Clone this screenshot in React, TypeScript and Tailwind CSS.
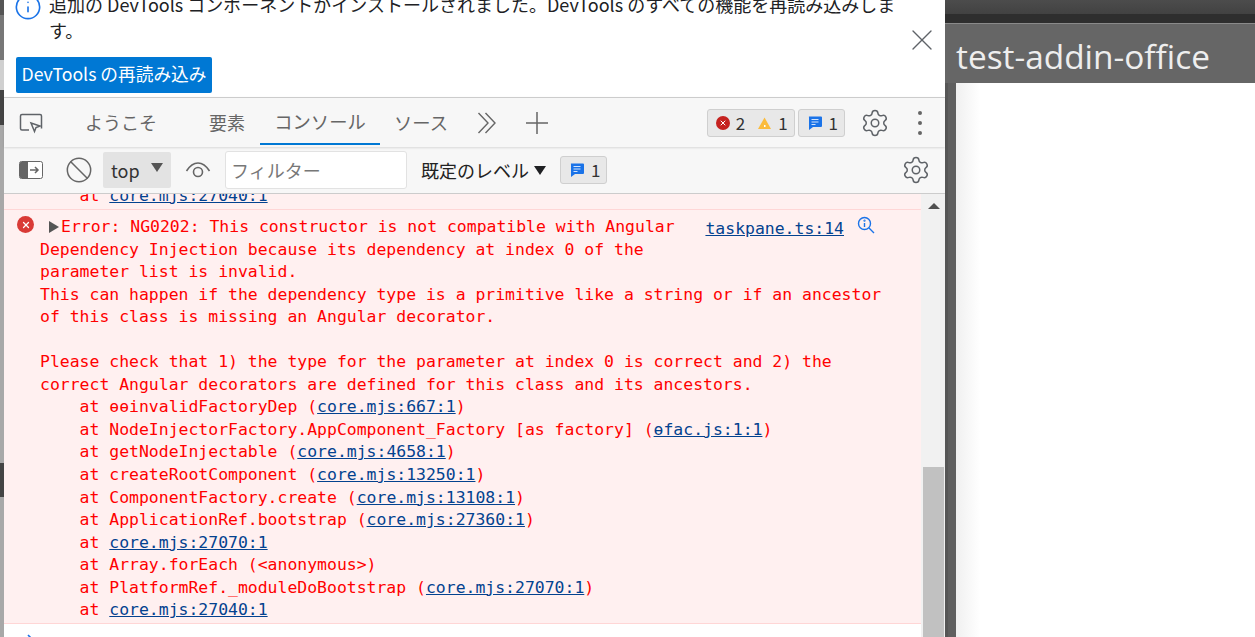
import { Settings, Ban, X, Info } from 'lucide-react'

const MONO = 'font-["DejaVu_Sans_Mono","Liberation_Mono",monospace]'

function Link({ children }: { children: string }) {
  return <span className="text-[#03428f] underline">{children}</span>
}

function MessageIcon({ size = 16 }: { size?: number }) {
  return (
    <svg width={size} height={size} viewBox="0 0 16 16">
      <path d="M2 1.5h12a1 1 0 0 1 1 1v8.5a1 1 0 0 1-1 1H6l-4 3V2.500a1 1 0 0 1 0-1z" fill="#1a73e8" />
      <path d="M4.500 4.500h7M4.500 7h7M4.500 9.500h4" stroke="#d2e3fc" strokeWidth="1.200" />
    </svg>
  )
}

function CountBadge({ children }: { children: React.ReactNode }) {
  return (
    <div className="h-[28px] flex items-center gap-[6px] pl-[8px] pr-[6px] bg-[#e8e8e8] border border-[#cfcfcf] rounded-[3px] text-[17px] text-[#333]">
      {children}
    </div>
  )
}

const STACK_TOP = [
  'Dependency Injection because its dependency at index 0 of the',
  'parameter list is invalid.',
  'This can happen if the dependency type is a primitive like a string or if an ancestor',
  'of this class is missing an Angular decorator.',
  ' ',
  'Please check that 1) the type for the parameter at index 0 is correct and 2) the',
  'correct Angular decorators are defined for this class and its ancestors.',
]

export default function App() {
  return (
    <div className='w-[1255px] h-[637px] flex overflow-hidden bg-white font-["Noto_Sans_CJK_JP","Noto_Sans",sans-serif]'>
      {/* what shows of the window behind */}
      <div className="w-[4px] h-full shrink-0 flex flex-col bg-[#a8a8a8]">
        <div className="h-[15px] bg-[#555555]" />
        <div className="h-[45px] bg-[#777777]" />
        <div className="h-[30px] bg-[#d0d0d0]" />
        <div className="h-[35px] bg-[#444444]" />
        <div className="h-[338px]" />
        <div className="h-[34px] bg-[#444444]" />
      </div>

      <div className="w-[941px] h-full shrink-0 flex flex-col">
        {/* Infobar */}
        <div className="h-[97px] shrink-0 relative bg-white overflow-hidden pl-[12px] text-[#202124]">
          <div className="flex -mt-[8px]">
            <Info size={28} strokeWidth={1.4} className="text-[#1a73e8] shrink-0 mt-[1px] -ml-[2px]" />
            <div className="ml-[7px] -mt-[1px] w-[850px] text-[18px] leading-[26px]">
              追加の DevTools コンポーネントがインストールされました。DevTools のすべての機能を再読み込みします。
            </div>
          </div>
          <button className="mt-[14px] h-[36px] w-[196px] pb-[3px] bg-[#0078d4] text-white rounded-[2px] text-[17.700px] whitespace-nowrap">
            DevTools の再読み込み
          </button>
          <X size={36} strokeWidth={0.9} className="absolute left-[900px] top-[22px] text-[#5f6368]" />
        </div>

        {/* Tabs */}
        <div className="h-[50px] shrink-0 flex items-start bg-[#f7f7f7] border-t border-[#cccccc] text-[18px] text-[#666] shadow-[0_1px_2px_rgba(0,0,0,0.12)] relative z-10">
          <div className="h-[47px] pt-[2px] flex items-center">
            <svg width="26" height="26" viewBox="0 0 26 26" fill="none" stroke="#5f6368" strokeWidth="1.500" className="ml-[14px] shrink-0">
              <path d="M11 20H4a1.500 1.500 0 0 1-1.500-1.500V6A1.500 1.500 0 0 1 4 4.500h18A1.500 1.500 0 0 1 23.500 6v12.500" />
              <path d="M13 13l9 3-4 1.500-1.500 4z" />
            </svg>
            <span className="ml-[41px]">ようこそ</span>
            <span className="ml-[52px]">要素</span>
            <div className="ml-[15px] h-full w-[120px] flex items-center justify-center border-b-2 border-[#0078d4] text-[18.300px]">コンソール</div>
            <span className="ml-[14px] text-[18.300px]">ソース</span>
            <svg width="20" height="22" viewBox="0 0 20 22" fill="none" stroke="#666" strokeWidth="1.400" className="ml-[29px]">
              <path d="M1.500 1l9.500 10-9.500 10M8.500 1l9.500 10-9.500 10" />
            </svg>
            <svg width="22" height="22" viewBox="0 0 22 22" fill="none" stroke="#666" strokeWidth="1.500" className="ml-[29px]">
              <path d="M11 0v22M0 11h22" />
            </svg>
          </div>
          <div className="ml-auto h-[47px] pt-[2px] flex items-center">
            <CountBadge>
              <span className="w-[14px] h-[14px] rounded-full bg-[#c5221f] flex items-center justify-center">
                <X size={8} strokeWidth={3} className="text-white" />
              </span>
              <span className="mr-[6px]">2</span>
              <svg width="15" height="14" viewBox="0 0 15 14">
                <path d="M7.500 1.500L14 13H1z" fill="#fbbc3d" />
                <rect x="7" y="9" width="1.500" height="2" fill="#fff" />
              </svg>
              <span>1</span>
            </CountBadge>
            <div className="ml-[3px]">
              <CountBadge>
                <MessageIcon />
                <span>1</span>
              </CountBadge>
            </div>
            <Settings size={30} strokeWidth={1.200} className="ml-[15px] text-[#5f6368]" />
            <div className="ml-[28px] mr-[22px] w-[5px] flex flex-col gap-[6px]">
              <span className="w-[4px] h-[4px] rounded-full bg-[#666]" />
              <span className="w-[4px] h-[4px] rounded-full bg-[#666]" />
              <span className="w-[4px] h-[4px] rounded-full bg-[#666]" />
            </div>
          </div>
        </div>

        {/* Console toolbar */}
        <div className="h-[47px] shrink-0 flex items-center bg-[#f7f7f7] border-b border-[#cccccc] text-[18px] text-[#333]">
          <svg width="24" height="18" viewBox="0 0 24 18" className="ml-[15px] shrink-0">
            <rect x="0.500" y="0.500" width="23" height="17" rx="2" fill="#fff" stroke="#666" />
            <path d="M2 1h7v16H2a1 1 0 0 1-1-1V2a1 1 0 0 1 1-1z" fill="#666" />
            <path d="M11 9h8M16 6l3 3-3 3" fill="none" stroke="#666" strokeWidth="1.500" />
          </svg>
          <Ban size={28} strokeWidth={1.300} className="ml-[22px] text-[#666]" />
          <div className="ml-[10px] h-[36px] w-[68px] bg-[#e3e3e3] rounded-[2px] flex items-center pl-[8px] text-[#333]">
            <span className="text-[18px]">top</span>
            <span className="ml-[11px] mb-[6px] w-0 h-0 border-x-[6px] border-x-transparent border-t-[9px] border-t-[#555]" />
          </div>
          <svg width="26" height="20" viewBox="0 0 26 20" fill="none" stroke="#666" strokeWidth="1.600" className="ml-[14px]">
            <path d="M1.500 11C5 5.500 9 3 13 3s8 2.500 11.500 8" />
            <circle cx="13" cy="12" r="4.500" />
          </svg>
          <div className="ml-[14px] h-[38px] w-[182px] bg-white border border-[#e2e2e2] rounded-[3px] flex items-center pl-[5px] text-[#777]">
            フィルター
          </div>
          <span className="ml-[14px] text-[#222]">既定のレベル</span>
          <span className="ml-[5px] w-0 h-0 border-x-[6px] border-x-transparent border-t-[9px] border-t-[#202124]" />
          <div className="ml-[14px]">
            <CountBadge>
              <MessageIcon />
              <span>1</span>
            </CountBadge>
          </div>
          <Settings size={30} strokeWidth={1.200} className="ml-auto mr-[14px] text-[#5f6368]" />
        </div>

        {/* Console log */}
        <div className="flex-1 min-h-0 flex">
          <div className={`w-[917px] h-full flex flex-col overflow-hidden bg-white text-[16.450px] leading-[22.550px] text-[#ff0000] whitespace-pre ${MONO}`}>
            <div className="h-[16px] overflow-hidden bg-[#fff0f0] border-b border-[#ffd6d6] pl-[36px] shrink-0">
              <div className="-mt-[9px]">    at <Link>core.mjs:27040:1</Link></div>
            </div>
            <div className="bg-[#fff0f0] border-b border-[#ffd6d6] pl-[36px] pt-[6px] pb-[1px] relative shrink-0">
              <span className="absolute left-[13px] top-[6px] w-[17px] h-[17px] rounded-full bg-[#d93a36] flex items-center justify-center">
                <X size={10} strokeWidth={3} className="text-white" />
              </span>
              <span className="absolute right-[77px] top-[8px]"><Link>taskpane.ts:14</Link></span>
              <svg width="18" height="18" viewBox="0 0 18 18" fill="none" stroke="#1a73e8" strokeWidth="1.400" className="absolute right-[46px] top-[6px]">
                <circle cx="7.500" cy="7.500" r="6" />
                <path d="M12 12l5 5M7.500 7v4" />
                <circle cx="7.500" cy="4.700" r="0.400" />
              </svg>
              <div className="pl-[9px] flex items-center">
                <span className="w-0 h-0 border-y-[6px] border-y-transparent border-l-[10px] border-l-[#555] mr-[2px]" />
                <span>Error: NG0202: This constructor is not compatible with Angular</span>
              </div>
              {STACK_TOP.map((line, i) => <div key={i}>{line}</div>)}
              <div>    at ɵɵinvalidFactoryDep (<Link>core.mjs:667:1</Link>)</div>
              <div>    at NodeInjectorFactory.AppComponent_Factory [as factory] (<Link>ɵfac.js:1:1</Link>)</div>
              <div>    at getNodeInjectable (<Link>core.mjs:4658:1</Link>)</div>
              <div>    at createRootComponent (<Link>core.mjs:13250:1</Link>)</div>
              <div>    at ComponentFactory.create (<Link>core.mjs:13108:1</Link>)</div>
              <div>    at ApplicationRef.bootstrap (<Link>core.mjs:27360:1</Link>)</div>
              <div>    at <Link>core.mjs:27070:1</Link></div>
              <div>    at Array.forEach (&lt;anonymous&gt;)</div>
              <div>    at PlatformRef._moduleDoBootstrap (<Link>core.mjs:27070:1</Link>)</div>
              <div>    at <Link>core.mjs:27040:1</Link></div>
            </div>
            <div className="flex-1 min-h-0 bg-white pl-[23px] pt-[10px]">
              <svg width="8" height="12" viewBox="0 0 8 12" fill="none" stroke="#1a73e8" strokeWidth="1.600">
                <path d="M1 1l5 5-5 5" />
              </svg>
            </div>
          </div>

          {/* Scrollbar */}
          <div className="w-[24px] h-full bg-[#f1f1f1] flex flex-col items-center pl-[1px]">
            <span className="mt-[9px] w-0 h-0 border-x-[6px] border-x-transparent border-b-[6px] border-b-[#505050]" />
            <div className="mt-[258px] flex-1 w-[21px] bg-[#c1c1c1]" />
          </div>
        </div>
      </div>

      {/* Task pane */}
      <div className="flex-1 min-w-0 h-full flex flex-col bg-[#5f5f5f]">
        <div className="h-[14px] shrink-0 bg-gradient-to-b from-[#4c4c4c] to-[#424242]" />
        <div className="h-[9px] shrink-0 bg-[#2e2e2e]" />
        <div className='h-[60px] shrink-0 bg-[#666666] border-t border-[#8a8a8a] pl-[11px] text-[33.400px] leading-[64px] text-[#eeeeee] font-["Open_Sans",sans-serif]'>
          test-addin-office
        </div>
        <div className="flex-1 flex">
          <div className="w-[11px] bg-[#5f5f5f] border-l-[3px] border-[#565656]" />
          <div className="flex-1 bg-gradient-to-r from-[#f0f0f0] to-white to-[8%]" />
        </div>
      </div>
    </div>
  )
}
